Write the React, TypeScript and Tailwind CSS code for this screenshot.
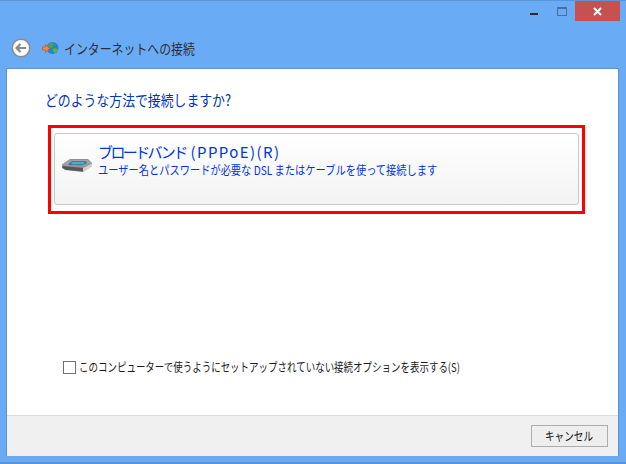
const font = { fontFamily: '"Noto Sans CJK JP", "Liberation Sans", sans-serif' }

function CaptionButtons() {
    return (
        <div className="flex h-[20px] justify-end pr-[6px]">
            <div className="flex w-[30px] items-start justify-center pt-[12px]">
                <div className="h-[2px] w-[8px] bg-[#2a2a2a]" />
            </div>
            <div className="flex w-[26px] items-start justify-center pt-[6px]">
                <div className="h-[9px] w-[10px] border border-t-2 border-[#4a6f9c]" />
            </div>
            <div className="flex w-[45px] items-center justify-center bg-[#c75050]">
                <svg width="9" height="9" viewBox="0 0 9 9">
                    <path d="M1 1 L8 8 M8 1 L1 8" stroke="#fff" strokeWidth="2" fill="none" />
                </svg>
            </div>
        </div>
    )
}

function BackButton() {
    return (
        <svg width="20" height="20" viewBox="0 0 20 20">
            <circle cx="10" cy="10" r="8.8" fill="#fbfbfb" stroke="#8b8b8b" strokeWidth="1.6" />
            <path d="M15 10 H6 M9.5 6 L5.5 10 L9.5 14" stroke="#8a8a8a" strokeWidth="2.2" fill="none" />
        </svg>
    )
}

function GlobeIcon() {
    return (
        <svg width="17" height="16" viewBox="0 0 17 16">
            <circle cx="10.5" cy="8" r="6" fill="#2f7fc9" />
            <path d="M7 4 Q10 2 11.5 4 Q12.5 6 9.5 7.5 Q7 8.5 6 6 Z" fill="#4aa83c" />
            <path d="M11 8.5 Q14 7.5 16 9.5 Q15 12.5 12.5 13 Q10 11 11 8.5 Z" fill="#5bb344" />
            <path d="M0.5 7 H3.5 V4.5 L7.5 8.5 L3.5 12.5 V10 H0.5 Z" fill="#f08a4b" stroke="#c4561e" strokeWidth="0.7" />
        </svg>
    )
}

function DriveIcon() {
    return (
        <svg width="32" height="15" viewBox="0 0 32 15">
            <path d="M1 6.5 L9 1 L27 1 L31 5 L31 8 L22 14 L4 12 L1 10 Z" fill="#8f9192" />
            <path d="M2 6.5 L9.5 2 L26.5 2 L30 5 L22 8.5 L6 8 Z" fill="#a3a6a8" />
            <path d="M7 6 L11 3 L25 3 L26 5.5 L21 7.5 L8 7.2 Z" fill="#3b7f9f" />
            <path d="M10 5.5 L12 4 L23 4 L23 6 L11 6.2 Z" fill="#62a5c0" />
            <path d="M1.5 8 L22 10 L22 13.5 L4.5 11.8 L1.5 9.8 Z" fill="#55585a" />
            <path d="M22 10 L31 5.5 L31 8 L22 14 Z" fill="#cfd1d2" />
        </svg>
    )
}

export default function App() {
    return (
        <div
            className="flex h-[464px] w-[626px] flex-col overflow-hidden border-t border-b-2 border-t-[#5c93d6] border-b-[#5c93d6] bg-[#6aabf6]"
            style={font}
        >
            <CaptionButtons />

            <div className="flex h-[47px] items-center pl-[11px] pt-[7px]">
                <BackButton />
                <div className="ml-[11px]">
                    <GlobeIcon />
                </div>
                <span className="ml-[5px] origin-left scale-x-[0.85] whitespace-nowrap text-[14px] leading-none text-[#303030]">
                    インターネットへの接続
                </span>
            </div>

            <div className="ml-[6px] mr-[7px] flex h-[388px] flex-col border border-b-0 border-[#5c93d6] bg-white">
                <div className="flex-1 pl-[38px] pt-[20px]">
                    <h1 className="origin-left scale-x-[0.857] whitespace-nowrap text-[15px] font-normal leading-[22px] text-[#0033bc]">
                        どのような方法で接続しますか?
                    </h1>

                    <div className="ml-[3px] mt-[14px] h-[89px] w-[537px] border-[3px] border-[#ff0000] px-[3px] pt-[5px]">
                        <div className="flex h-[72px] w-[525px] rounded-[3px] border border-[#c8c8c8] bg-gradient-to-b from-white to-[#f3f3f3] pl-[6px] pt-[8px]">
                            <div className="mt-[16px]">
                                <DriveIcon />
                            </div>
                            <div className="ml-[5px] whitespace-nowrap text-[#0033e6]">
                                <div className="text-[15px] leading-[20px]">
                                    <span className="tracking-[-2.6px]">ブロードバンド</span>
                                    <span className="ml-[5px] tracking-[1.4px]">(PPPoE)(R)</span>
                                </div>
                                <div className="origin-left scale-x-[0.853] text-[12px] leading-[16px]">
                                    ユーザー名とパスワードが必要な DSL またはケーブルを使って接続します
                                </div>
                            </div>
                        </div>
                    </div>

                    <label className="ml-[18px] mt-[145px] flex items-center">
                        <span className="h-[13px] w-[13px] shrink-0 border border-[#707070] bg-white" />
                        <span className="ml-[3px] origin-left scale-x-[0.79] whitespace-nowrap text-[12px] leading-[16px] text-[#1a1a1a]">
                            このコンピューターで使うようにセットアップされていない接続オプションを表示する(S)
                        </span>
                    </label>
                </div>

                <div className="flex h-[41px] items-center justify-end border-t border-[#dfdfdf] bg-[#f0f0f0] pr-[10px]">
                    <button className="flex h-[22px] w-[77px] items-center justify-center border border-[#adadad] bg-[#eeeeee] text-[12px] leading-none text-[#111]">
                        <span className="scale-x-[0.8]">キャンセル</span>
                    </button>
                </div>
            </div>
        </div>
    )
}
